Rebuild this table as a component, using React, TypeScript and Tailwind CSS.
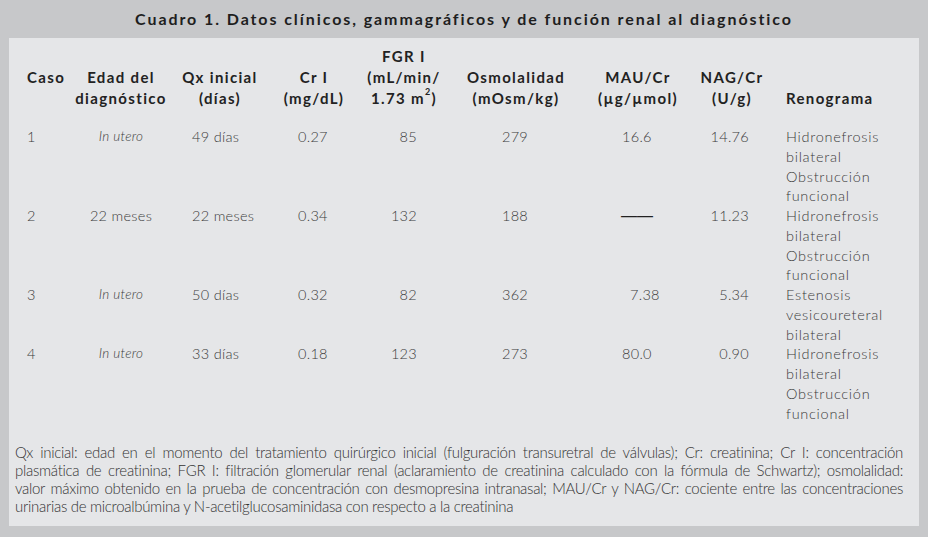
import React from 'react';

type Row = {
  caso: string;
  edad: string;
  edadItalic?: boolean;
  qx: string;
  cr: string;
  fgr: string;
  osm: string;
  mau: string;
  mauPad: string;
  nag: string;
  reno: string[];
};

const rows: Row[] = [
  { caso: '1', edad: 'In utero', edadItalic: true, qx: '49 días', cr: '0.27', fgr: '85', osm: '279', mau: '16.6', mauPad: 'pl-[43px]', nag: '14.76', reno: ['Hidronefrosis', 'bilateral', 'Obstrucción', 'funcional'] },
  { caso: '2', edad: '22 meses', qx: '22 meses', cr: '0.34', fgr: '132', osm: '188', mau: '——', mauPad: 'pl-[42px]', nag: '11.23', reno: ['Hidronefrosis', 'bilateral', 'Obstrucción', 'funcional'] },
  { caso: '3', edad: 'In utero', edadItalic: true, qx: '50 días', cr: '0.32', fgr: '82', osm: '362', mau: '7.38', mauPad: 'pl-[51px]', nag: '5.34', reno: ['Estenosis', 'vesicoureteral', 'bilateral'] },
  { caso: '4', edad: 'In utero', edadItalic: true, qx: '33 días', cr: '0.18', fgr: '123', osm: '273', mau: '80.0', mauPad: 'pl-[43px]', nag: '0.90', reno: ['Hidronefrosis', 'bilateral', 'Obstrucción', 'funcional'] },
];

const notes = [
  'Qx inicial: edad en el momento del tratamiento quirúrgico inicial (fulguración transuretral de válvulas); Cr: creatinina; Cr I: concentración',
  'plasmática de creatinina; FGR I: filtración glomerular renal (aclaramiento de creatinina calculado con la fórmula de Schwartz); osmolalidad:',
  'valor máximo obtenido en la prueba de concentración con desmopresina intranasal; MAU/Cr y NAG/Cr: cociente entre las concentraciones',
];

export default function App() {
  return (
    <div className="w-[928px] h-[537px] bg-[#c7c8ca] font-['Lato','Noto_Sans',sans-serif] overflow-hidden">
      <h1 className="h-[38px] flex items-center justify-center text-[16px] font-bold tracking-[0.12em] text-[#1e1e1e]">
        Cuadro 1. Datos clínicos, gammagráficos y de función renal al diagnóstico
      </h1>

      <div className="ml-[9px] w-[910px] h-[488px] bg-[#e5e6e8] pt-[8px]">
        <table className="table-fixed w-full border-collapse">
          <colgroup>
            <col className="w-[66px]" />
            <col className="w-[92px]" />
            <col className="w-[106px]" />
            <col className="w-[82px]" />
            <col className="w-[98px]" />
            <col className="w-[126px]" />
            <col className="w-[118px]" />
            <col className="w-[70px]" />
            <col className="w-[152px]" />
          </colgroup>
          <thead>
            <tr className="text-[15px] font-bold leading-[21px] tracking-[0.09em] text-[#222] align-bottom">
              <th className="text-left pl-[18px] font-bold pb-[39px]">Caso</th>
              <th className="text-center font-bold pb-[18px]">Edad del<br />diagnóstico</th>
              <th className="text-center font-bold pb-[18px]">Qx inicial<br />(días)</th>
              <th className="text-center font-bold pb-[18px]">Cr I<br />(mg/dL)</th>
              <th className="text-center font-bold pb-[18px]">
                FGR I<br />(mL/min/<br />1.73 m<sup className="text-[9px] align-[5px]">2</sup>)
              </th>
              <th className="text-center font-bold pb-[18px]">Osmolalidad<br />(mOsm/kg)</th>
              <th className="text-center font-bold pb-[18px]">MAU/Cr<br />(µg/µmol)</th>
              <th className="text-center font-bold pb-[18px]">NAG/Cr<br />(U/g)</th>
              <th className="text-left pl-[19px] font-bold pb-[18px]">Renograma</th>
            </tr>
          </thead>
          <tbody className="text-[14.5px] leading-[19.75px] tracking-[0.02em] text-[#3c3c3c] font-light">
            {rows.map((r) => (
              <tr key={r.caso} className="align-top">
                <td className="pl-[18px]">{r.caso}</td>
                <td className={`text-center ${r.edadItalic ? 'italic text-[13.5px]' : ''}`}>{r.edad}</td>
                <td className="pl-[25px]">{r.qx}</td>
                <td className="pl-[25px]">{r.cr}</td>
                <td className="text-right pr-[36px]">{r.fgr}</td>
                <td className="text-center pr-[2px]">{r.osm}</td>
                <td className={r.mauPad}>
                  {r.mau === '——' ? (
                    <span className="font-['Liberation_Sans',sans-serif] text-[16px] font-normal tracking-[0px] text-[#222]">——</span>
                  ) : (
                    r.mau
                  )}
                </td>
                <td className="text-right pr-[18px]">{r.nag}</td>
                <td className="pl-[19px] tracking-[0.05em]">
                  {r.reno.map((line) => (
                    <div key={line}>{line}</div>
                  ))}
                </td>
              </tr>
            ))}
          </tbody>
        </table>

        <div className="mt-[20px] pl-[6px] pr-[16px] text-[15px] leading-[18px] text-[#333] font-light tracking-[-0.02em]">
          {notes.map((n) => (
            <p key={n} className="text-justify [text-align-last:justify] whitespace-nowrap">{n}</p>
          ))}
          <p>urinarias de microalbúmina y N-acetilglucosaminidasa con respecto a la creatinina</p>
        </div>
      </div>
    </div>
  );
}
